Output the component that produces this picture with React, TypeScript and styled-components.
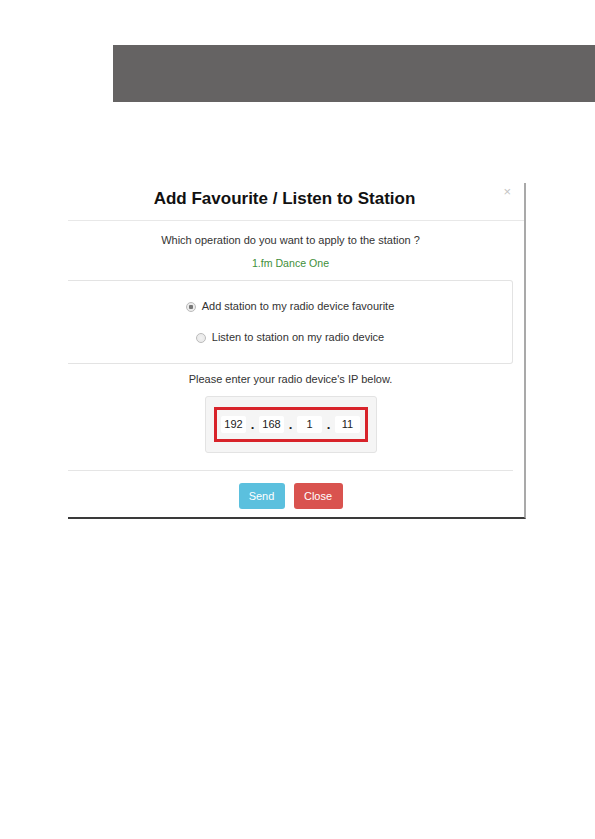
import React from 'react'
import styled, { createGlobalStyle } from 'styled-components'

const GlobalStyle = createGlobalStyle`
    html, body {
        margin: 0;
        padding: 0;
        background: #fff;
        font-family: "Liberation Sans", Arial, sans-serif;
    }
`

const Page = styled.div`
    width: 595px;
    height: 839px;
    padding-top: 45px;
    box-sizing: border-box;
`

const Banner = styled.div`
    margin-left: 113px;
    height: 57px;
    background-color: #656363;
`

const Shot = styled.div`
    margin-top: 81px;
    margin-left: 68px;
    width: 456px;
    height: 334px;
    display: flex;
    border-right: 2px solid #a9a9a9;
    border-bottom: 2px solid #3a3a3a;
`

const Modal = styled.div`
    width: 445px;
    display: flex;
    flex-direction: column;
    color: #333;
`

const Header = styled.div`
    position: relative;
    flex-shrink: 0;
    height: 31px;
    padding-bottom: 6px;
    display: flex;
    align-items: center;
    justify-content: center;
    border-bottom: 1px solid #e8e8e8;
    margin-right: -11px;
    padding-right: 23px;
`

const Title = styled.h4`
    margin: 0;
    font-size: 17px;
    font-weight: bold;
    color: #111;
`

const CloseX = styled.span`
    position: absolute;
    right: 13px;
    top: 1px;
    font-size: 13px;
    line-height: 15px;
    color: #c4c4c4;
`

const Body = styled.div`
    flex-shrink: 0;
    display: flex;
    flex-direction: column;
    align-items: center;
`

const Line = styled.p<{ $green?: boolean }>`
    margin: 0;
    font-size: ${p => (p.$green ? '10.6px' : '11px')};
    line-height: 23px;
    color: ${p => (p.$green ? '#3f8f3a' : '#333')};
`

const Panel = styled.div`
    align-self: stretch;
    margin-top: 5px;
    height: 82px;
    border: 1px solid #e3e3e3;
    border-left: none;
    border-radius: 0 3px 3px 0;
    display: flex;
    flex-direction: column;
    align-items: center;
    justify-content: center;
    gap: 18px;
`

const RadioRow = styled.label`
    display: flex;
    align-items: center;
    gap: 6px;
    font-size: 11px;
    line-height: 13px;
    color: #333;
`

const Radio = styled.span<{ $on?: boolean }>`
    width: 8px;
    height: 8px;
    border-radius: 50%;
    border: 1px solid #bbb;
    background: radial-gradient(circle, ${p => (p.$on ? '#777 0 2px' : '#f2f2f2 0')}, #ececec 2.5px);
`

const Prompt = styled.p`
    margin: 8px 0 0;
    font-size: 11px;
    line-height: 14px;
    color: #333;
`

const Well = styled.div`
    margin-top: 10px;
    width: 170px;
    height: 55px;
    border: 1px solid #e3e3e3;
    border-radius: 3px;
    background: #f5f5f5;
    display: flex;
    align-items: center;
    justify-content: center;
`

const RedFrame = styled.div`
    width: 148px;
    height: 29px;
    border: 3px solid #d8232a;
    display: flex;
    align-items: center;
    justify-content: center;
`

const Octet = styled.span`
    width: 25px;
    height: 17px;
    background: #fff;
    border-radius: 2px;
    font-size: 11px;
    line-height: 17px;
    text-align: center;
    color: #222;
`

const Dot = styled.span`
    width: 13px;
    text-align: center;
    font-size: 13px;
    font-weight: bold;
    line-height: 17px;
    color: #222;
`

const Footer = styled.div`
    flex: 1;
    margin-top: 17px;
    border-top: 1px solid #e5e5e5;
    display: flex;
    justify-content: center;
    align-items: flex-start;
    padding-top: 12px;
    gap: 9px;
`

const Btn = styled.button<{ $tone: string; $w: number }>`
    width: ${p => p.$w}px;
    height: 26px;
    padding: 0;
    border: none;
    border-radius: 3px;
    background: ${p => p.$tone};
    color: #fff;
    font-family: "Liberation Sans", Arial, sans-serif;
    font-size: 11px;
`

export default function App() {
    const ip = ['192', '168', '1', '11']
    return (
        <Page>
            <GlobalStyle />
            <Banner />
            <Shot>
                <Modal>
                    <Header>
                        <Title>Add Favourite / Listen to Station</Title>
                        <CloseX>×</CloseX>
                    </Header>
                    <Body>
                        <Line style={{ marginTop: 8 }}>Which operation do you want to apply to the station ?</Line>
                        <Line $green>1.fm Dance One</Line>
                        <Panel>
                            <RadioRow>
                                <Radio $on />
                                Add station to my radio device favourite
                            </RadioRow>
                            <RadioRow>
                                <Radio />
                                Listen to station on my radio device
                            </RadioRow>
                        </Panel>
                        <Prompt>Please enter your radio device's IP below.</Prompt>
                        <Well>
                            <RedFrame>
                                {ip.map((v, i) => (
                                    <React.Fragment key={i}>
                                        {i > 0 && <Dot>.</Dot>}
                                        <Octet>{v}</Octet>
                                    </React.Fragment>
                                ))}
                            </RedFrame>
                        </Well>
                    </Body>
                    <Footer>
                        <Btn $tone="#5bc0de" $w={46}>Send</Btn>
                        <Btn $tone="#d9534f" $w={49}>Close</Btn>
                    </Footer>
                </Modal>
            </Shot>
        </Page>
    )
}
